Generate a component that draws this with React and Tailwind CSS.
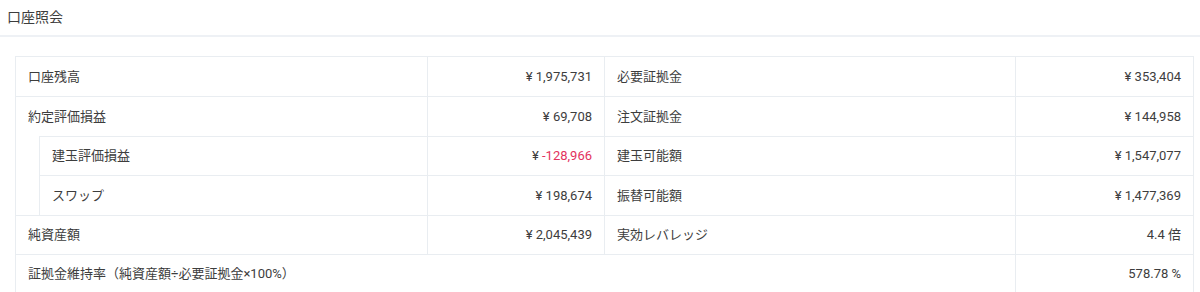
import React from "react";

const rows = [
  { label: "口座残高", value: "1,975,731", label2: "必要証拠金", value2: "¥ 353,404" },
  { label: "約定評価損益", value: "69,708", label2: "注文証拠金", value2: "¥ 144,958" },
  { label: "建玉評価損益", value: "-128,966", red: true, nested: true, label2: "建玉可能額", value2: "¥ 1,547,077" },
  { label: "スワップ", value: "198,674", nested: true, label2: "振替可能額", value2: "¥ 1,477,369" },
  { label: "純資産額", value: "2,045,439", label2: "実効レバレッジ", value2: "4.4 倍" },
];

function Row({ row, first }) {
  const top = first ? "" : "border-t border-[#e9edf1]";
  return (
    <div className="flex h-[39.4px]">
      {row.nested ? (
        <div className="flex w-[412px] border-r border-[#e9edf1]">
          <div className="w-[23px]" />
          <div className="flex flex-1 items-center border-l border-t border-[#e9edf1] pl-3">
            {row.label}
          </div>
        </div>
      ) : (
        <div className={`flex w-[412px] items-center border-r border-[#e9edf1] pl-3 ${top}`}>
          {row.label}
        </div>
      )}
      <div className={`flex w-[177px] items-center justify-end border-r border-[#e9edf1] pr-3 ${top}`}>
        <span className="whitespace-pre">
          {"¥ "}
          <span className={row.red ? "text-[#e3325e]" : ""}>{row.value}</span>
        </span>
      </div>
      <div className={`flex w-[411px] items-center border-r border-[#e9edf1] pl-3 ${top}`}>
        {row.label2}
      </div>
      <div className={`flex w-[177px] items-center justify-end pr-3 ${top}`}>
        {row.value2}
      </div>
    </div>
  );
}

export default function App() {
  return (
    <div
      className="h-[292px] w-[1200px] overflow-hidden bg-white text-[13px] text-[#3d3d3d]"
      style={{ fontFamily: 'Roboto, "Noto Sans CJK JP", sans-serif' }}
    >
      {/* header */}
      <div className="flex h-[37px] items-center border-b-2 border-[#eef1f5] px-[7px] text-[14px]">
        口座照会
      </div>

      {/* account table */}
      <div className="ml-[15px] mt-[19px] w-[1179px] border border-[#e9edf1]">
        {rows.map((row, i) => (
          <Row key={row.label} row={row} first={i === 0} />
        ))}
        <div className="flex h-[39.4px] border-t border-[#e9edf1]">
          <div className="flex w-[1000px] items-center border-r border-[#e9edf1] pl-3">
            証拠金維持率（純資産額÷必要証拠金×100%）
          </div>
          <div className="flex w-[177px] items-center justify-end pr-3">578.78 %</div>
        </div>
      </div>
    </div>
  );
}
